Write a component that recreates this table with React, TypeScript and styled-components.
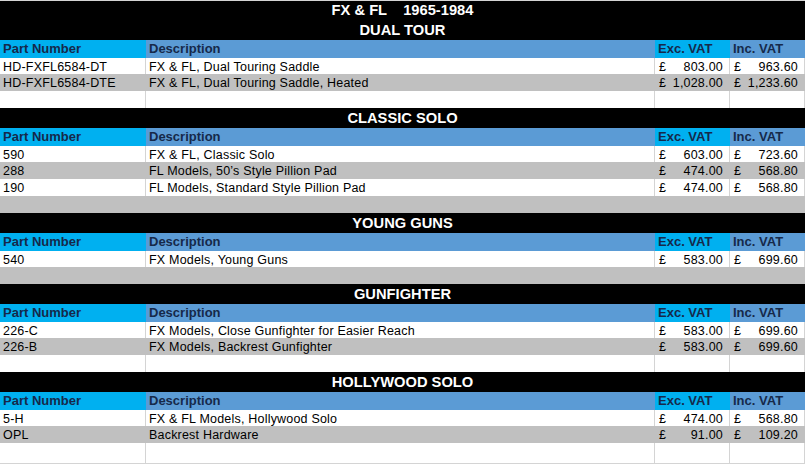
import styled, { createGlobalStyle } from 'styled-components';

const GlobalStyle = createGlobalStyle`
  html, body {
    margin: 0;
    padding: 0;
    background: #ffffff;
  }
  body {
    font-family: 'Liberation Sans', Arial, sans-serif;
  }
`;

type Item = { part: string; desc: string; exc: string; inc: string };
type Section = { title: string[]; items: Item[] };

const sections: Section[] = [
  {
    title: ['FX & FL    1965-1984', 'DUAL TOUR'],
    items: [
      { part: 'HD-FXFL6584-DT', desc: 'FX & FL, Dual Touring Saddle', exc: '803.00', inc: '963.60' },
      { part: 'HD-FXFL6584-DTE', desc: 'FX & FL, Dual Touring Saddle, Heated', exc: '1,028.00', inc: '1,233.60' },
    ],
  },
  {
    title: ['CLASSIC SOLO'],
    items: [
      { part: '590', desc: 'FX & FL, Classic Solo', exc: '603.00', inc: '723.60' },
      { part: '288', desc: 'FL Models, 50\u2019s Style Pillion Pad', exc: '474.00', inc: '568.80' },
      { part: '190', desc: 'FL Models, Standard Style Pillion Pad', exc: '474.00', inc: '568.80' },
    ],
  },
  {
    title: ['YOUNG GUNS'],
    items: [{ part: '540', desc: 'FX Models, Young Guns', exc: '583.00', inc: '699.60' }],
  },
  {
    title: ['GUNFIGHTER'],
    items: [
      { part: '226-C', desc: 'FX Models, Close Gunfighter for Easier Reach', exc: '583.00', inc: '699.60' },
      { part: '226-B', desc: 'FX Models, Backrest Gunfighter', exc: '583.00', inc: '699.60' },
    ],
  },
  {
    title: ['HOLLYWOOD SOLO'],
    items: [
      { part: '5-H', desc: 'FX & FL Models, Hollywood Solo', exc: '474.00', inc: '568.80' },
      { part: 'OPL', desc: 'Backrest Hardware', exc: '91.00', inc: '109.20' },
    ],
  },
];

function Price({ value }: { value: string }) {
  return (
    <PriceCell>
      <span>£</span>
      <span>{value}</span>
    </PriceCell>
  );
}

export default function App() {
  return (
    <>
      <GlobalStyle />
      <Sheet>
        {sections.map((section, si) => {
          const isLast = si === sections.length - 1;
          return (
            <Block key={section.title.join('-')} $grow={isLast}>
              {section.title.map((line) => (
                <TitleLine key={line} $first={si === 0 && line === section.title[0]}>
                  {line}
                </TitleLine>
              ))}
              <HeaderRow>
                <HeadCell $tone="cyan">Part Number</HeadCell>
                <HeadCell $tone="blue">Description</HeadCell>
                <HeadCell $tone="cyan">Exc. VAT</HeadCell>
                <HeadCell $tone="blue">Inc. VAT</HeadCell>
              </HeaderRow>
              <Rows $grow={isLast}>
                {section.items.map((item, i) => (
                  <Row key={item.part} $shaded={i % 2 === 1}>
                    <Cell>{item.part}</Cell>
                    <Cell>{item.desc}</Cell>
                    <Price value={item.exc} />
                    <Price value={item.inc} />
                  </Row>
                ))}
                <Row $shaded={section.items.length % 2 === 1} $grow={isLast}>
                  <Cell />
                  <Cell />
                  <Cell />
                  <Cell />
                </Row>
              </Rows>
            </Block>
          );
        })}
      </Sheet>
    </>
  );
}

const Sheet = styled.div`
  width: 805px;
  height: 464px;
  box-sizing: border-box;
  border-top: 1px solid #d4d4d4;
  border-bottom: 1px solid #d4d4d4;
  display: flex;
  flex-direction: column;
  overflow: hidden;
`;

const Block = styled.section<{ $grow?: boolean }>`
  display: flex;
  flex-direction: column;
  flex: ${({ $grow }) => ($grow ? '1' : '0 0 auto')};
`;

const TitleLine = styled.div<{ $first?: boolean }>`
  height: ${({ $first }) => ($first ? '19px' : '20px')};
  line-height: ${({ $first }) => ($first ? '19px' : '20px')};
  background: #000000;
  color: #ffffff;
  font-weight: 700;
  font-size: 14.7px;
  text-align: center;
  white-space: pre;
`;

const columns = '146px 509px 75px 75px';

const HeaderRow = styled.div`
  display: grid;
  grid-template-columns: ${columns};
  height: 18px;
`;

const HeadCell = styled.div<{ $tone: 'cyan' | 'blue' }>`
  background: ${({ $tone }) => ($tone === 'cyan' ? '#00b0f0' : '#5b9bd5')};
  color: #16294a;
  font-weight: 700;
  font-size: 13px;
  line-height: 18px;
  padding-left: 3px;
  white-space: nowrap;
`;

const Rows = styled.div<{ $grow?: boolean }>`
  display: flex;
  flex-direction: column;
  flex: ${({ $grow }) => ($grow ? '1' : '0 0 auto')};

  & > div:first-child {
    height: 16px;
  }
`;

const Row = styled.div<{ $shaded?: boolean; $grow?: boolean }>`
  display: grid;
  grid-template-columns: ${columns};
  grid-template-rows: minmax(0, 1fr);
  height: 17px;
  flex: ${({ $grow }) => ($grow ? '1' : '0 0 auto')};
  background: ${({ $shaded }) => ($shaded ? '#c0c0c0' : '#ffffff')};

  & > div {
    border-right: 1px solid ${({ $shaded }) => ($shaded ? '#c0c0c0' : '#d4d4d4')};
  }
`;

const Cell = styled.div`
  box-sizing: border-box;
  padding-top: 1px;
  padding-left: 3px;
  font-size: 12.5px;
  letter-spacing: 0.2px;
  line-height: 17px;
  color: #000000;
  white-space: nowrap;
  overflow: hidden;
`;

const PriceCell = styled(Cell)`
  display: flex;
  justify-content: space-between;
  padding-left: 4px;
  padding-right: 6px;
`;
